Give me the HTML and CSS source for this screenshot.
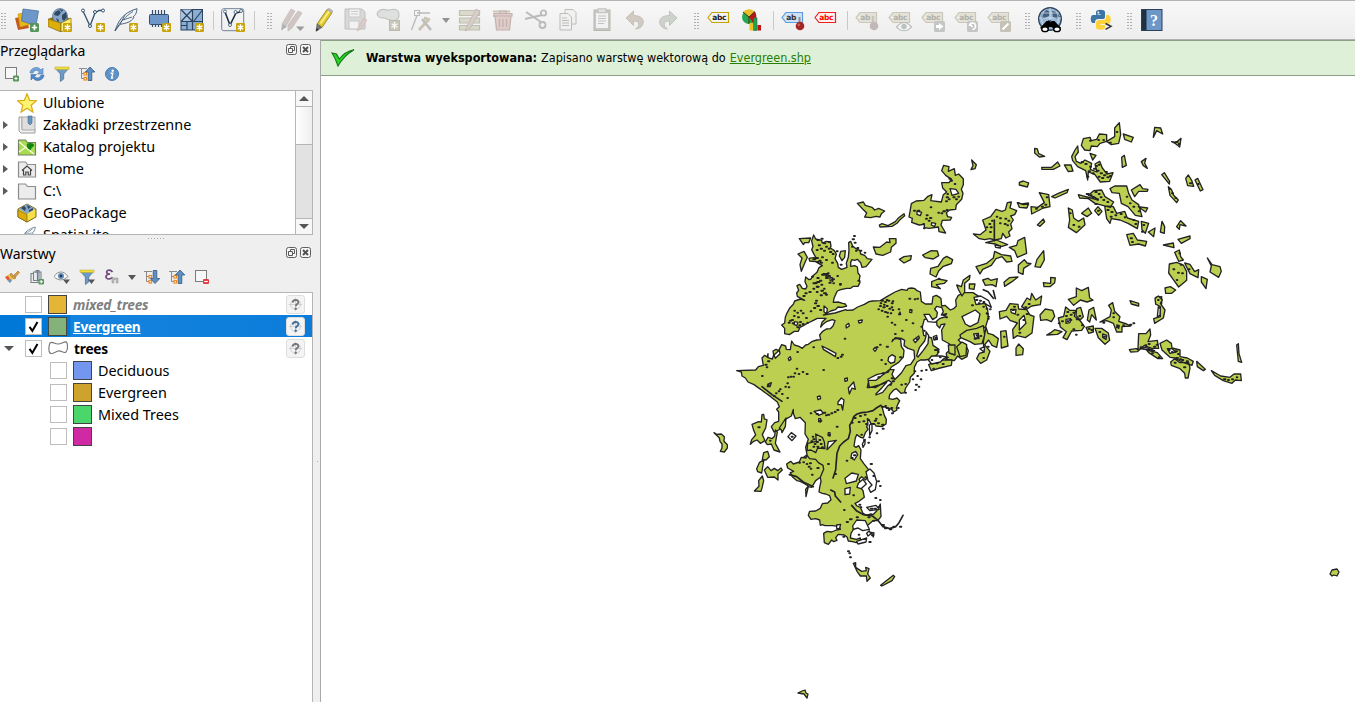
FILE: index.html
```html
<!DOCTYPE html>
<html lang="pl">
<head>
<meta charset="utf-8">
<title>QGIS</title>
<link rel="stylesheet" href="styles.css">
</head>
<body>
<svg class="defs" aria-hidden="true">
  <defs>
    <linearGradient id="gBlue" x1="0" y1="0" x2="1" y2="1"><stop offset="0" stop-color="#b4cbe6"/><stop offset="1" stop-color="#5d8abb"/></linearGradient>
    <linearGradient id="gSteel" x1="0" y1="0" x2="1" y2="1"><stop offset="0" stop-color="#7ba0cc"/><stop offset=".5" stop-color="#d7e3f0"/><stop offset="1" stop-color="#7a99bd"/></linearGradient>
    <linearGradient id="gGrey" x1="0" y1="0" x2="1" y2="1"><stop offset="0" stop-color="#f2f2f2"/><stop offset="1" stop-color="#c4c4c4"/></linearGradient>
    <linearGradient id="gYel" x1="0" y1="0" x2="0" y2="1"><stop offset="0" stop-color="#fbe84e"/><stop offset="1" stop-color="#d8b400"/></linearGradient>
  </defs>
  <symbol id="star-badge" viewBox="0 0 9 9"><rect width="9" height="9" rx="1.3" fill="#c8a30a"/><path d="M4.5 1.3v6.4M1.7 2.9l5.6 3.2M7.3 2.9L1.7 6.1" stroke="#fff" stroke-width="1.4"/></symbol>
  <symbol id="plus-badge" viewBox="0 0 9 9"><rect width="9" height="9" rx="1.5" fill="#57945a"/><path d="M4.5 1.8v5.4M1.8 4.5h5.4" stroke="#fff" stroke-width="1.7"/></symbol>
  <symbol id="box" viewBox="0 0 24 24"><path d="M0 11l12-5 11 5-10 4z" fill="#8d7513"/><circle cx="12" cy="8" r="7.5" fill="#86a5c7" stroke="#4a6583" stroke-width=".6"/><path d="M7 4l4-2 2 3-3 3-4-1zM14 7l4-3 1 5-3 4-2-2zM11 1l4 1-1 2zM8 10l3 2-1 3z" fill="#2f4963"/><path d="M0 11l13 4v9L0 18.500z" fill="#dcae0b" stroke="#7c6412" stroke-width=".7"/><path d="M13 15l10-5v9l-10 5z" fill="#fff173" stroke="#7c6412" stroke-width=".7"/></symbol>
  <symbol id="feather" viewBox="0 0 24 24"><path d="M1 23C4 14 8 5 23 .7c-.5 5-2 7-4 8l1 .6c-3 5-8 6-14 7z" fill="url(#gBlue)" stroke="#33526f" stroke-width=".9"/><path d="M1 23C6 14 12 8 19 3.500M6 16l5-9M9 12l9-3" fill="none" stroke="#33526f" stroke-width=".8"/></symbol>
  <symbol id="pencil" viewBox="0 0 24 24"><path d="M5 16L15 1.500l5 3.300L10 19.500z" fill="#e2c82f" stroke="#8f7d20" stroke-width=".8"/><path d="M8.500 15.500L17.300 3" stroke="#fff08a" stroke-width="1.700"/><path d="M15 1.500l2-1.200 3.800 2.500-.8 2z" fill="#bbb" stroke="#999" stroke-width=".5"/><path d="M5 16l5 3.500L4 23.300z" fill="#777" stroke="#555" stroke-width=".5"/><path d="M4.600 20l2 1.700L4 23.300z" fill="#222"/></symbol>
  <symbol id="tag" viewBox="0 0 24 24"><path d="M1 9.500l4-5h16.500v10H5z" stroke-width="1.200"/><circle cx="4.400" cy="9.500" r=".8" fill="#fff" stroke="none"/></symbol>
  <symbol id="funnel" viewBox="0 0 16 16"><path d="M1 2h14l-5.300 6v5l-3.300 2.500V8z" fill="#6d9bc8" stroke="#41698f" stroke-width=".7"/><rect x="1" y="1" width="14" height="2.500" fill="#f1df37" stroke="#b8a42e" stroke-width=".5"/></symbol>
  <symbol id="tree-up" viewBox="0 0 16 16"><path d="M0 2.500h8M2.500 2.500v10H8M2.500 7.500h4" fill="none" stroke="#8b8b8b"/><rect x="5" y="6.500" width="2.500" height="2.500" fill="#fff" stroke="#f08b20" stroke-width="1.200"/><rect x="5" y="11.500" width="2.500" height="2.500" fill="#fff" stroke="#f08b20" stroke-width="1.200"/><path d="M11 1l4.800 5H12.800v8.500H9.200V6H6.300z" fill="#5f8fc2" stroke="#31587f" stroke-width=".8"/></symbol>
  <symbol id="tree-down" viewBox="0 0 16 16"><path d="M0 2.500h8M2.500 2.500v10H8M2.500 7.500h4" fill="none" stroke="#8b8b8b"/><rect x="5" y="6.500" width="2.500" height="2.500" fill="#fff" stroke="#f08b20" stroke-width="1.200"/><rect x="5" y="11.500" width="2.500" height="2.500" fill="#fff" stroke="#f08b20" stroke-width="1.200"/><path d="M11 14.500l4.800-5H12.800V1.500H9.200v8H6.300z" fill="#5f8fc2" stroke="#31587f" stroke-width=".8"/></symbol>
  <symbol id="folder" viewBox="0 0 20 20"><path d="M1.500 3h7l2 2.500h8V18h-17z" fill="#ececec" stroke="#8c8c8c" stroke-width="1.200"/></symbol>
  <symbol id="float" viewBox="0 0 11 11"><rect x=".5" y=".5" width="10" height="10" rx="2" fill="#f5f5f5" stroke="#5f5f5f"/><path d="M4.500 4V2.500h4v4H7M2.500 4.500h4v4h-4z" fill="none" stroke="#5a5a5a"/></symbol>
  <symbol id="close" viewBox="0 0 11 11"><rect x=".5" y=".5" width="10" height="10" rx="2" fill="#f5f5f5" stroke="#5f5f5f"/><path d="M3 3l5 5M8 3L3 8" stroke="#505050" stroke-width="1.900"/></symbol>
  <symbol id="crs" viewBox="0 0 19 19"><circle cx="9.500" cy="9.500" r="5.500" fill="none" stroke="#c9cdd1"/><path d="M2 9.500h15M9.500 2v15" stroke="#c9cdd1"/><path d="M6.500 7.500C6 3.500 13 3.300 12.800 7c-.2 2-3 2.200-3 4.500" fill="none" stroke="currentColor" stroke-width="2.200"/><circle cx="9.700" cy="14.300" r="1.400" fill="currentColor"/></symbol>
  <symbol id="tick" viewBox="0 0 17 17"><path d="M4 9l3.200 4.500L13 3.500" fill="none" stroke="#000" stroke-width="2.300"/></symbol>
</svg>

<header class="toolbar">
  <i class="grip first"></i>
  <span class="tool"><svg viewBox="0 0 24 24"><path d="M0 10l11-2 3 12-11 2z" fill="#c2591f"/><path d="M3 6l12-2 2 12-12 3z" fill="#e9b818" stroke="#c49210" stroke-width=".6"/><path d="M8 1l15.500 2L21 17.500 6.500 13z" fill="#6c97c8" stroke="#4b739f" stroke-width=".8"/><use href="#plus-badge" x="15" y="15" width="9" height="9"/></svg></span>
  <span class="tool"><svg viewBox="0 0 24 24"><use href="#box" width="24" height="24"/><use href="#star-badge" x="15" y="15" width="9" height="9"/></svg></span>
  <span class="tool"><svg viewBox="0 0 24 24"><path d="M2 3l7 15 5-13 4-2.500h3" fill="none" stroke="#34506e" stroke-width="1.300"/><g fill="#fff" stroke="#34506e"><circle cx="2" cy="2.500" r="1.500"/><circle cx="9" cy="18" r="1.500"/><circle cx="14" cy="4" r="1.500"/><circle cx="22" cy="2.500" r="1.500"/></g><use href="#star-badge" x="15" y="15" width="9" height="9"/></svg></span>
  <span class="tool"><svg viewBox="0 0 24 24"><use href="#feather" width="24" height="24"/><use href="#star-badge" x="15" y="15" width="9" height="9"/></svg></span>
  <span class="tool"><svg viewBox="0 0 24 24"><path d="M5.500 2v17M8.500 2v17M11.500 2v17M14.500 2v17M17.500 2v17" stroke="#33506f" stroke-width="1.200"/><rect x="2.500" y="6.500" width="19" height="10" rx="1" fill="#6c97c8" stroke="#33506f"/><use href="#star-badge" x="15" y="15" width="9" height="9"/></svg></span>
  <span class="tool"><svg viewBox="0 0 24 24"><rect x="1" y="1.500" width="21.500" height="20.500" fill="#8caed4" stroke="#29435e"/><path d="M1 1.500h11.500v12H1z" fill="#a9c3e0"/><path d="M1 1.500l11.500 12M12.500 1.500L1 13.500M22.500 2l-9 11.500M1 13.500h21.500M12.500 1.500v20.500M7 13.500V22M1 17.500h6" fill="none" stroke="#29435e" stroke-width="1.200"/><use href="#star-badge" x="15" y="15" width="9" height="9"/></svg></span>
  <i class="sep"></i>
  <span class="tool"><svg viewBox="0 0 24 24"><rect x=".7" y=".7" width="22" height="22" rx="2" fill="url(#gSteel)" stroke="#6f8199"/><path d="M4 4l5 13 6-12 4-1" fill="none" stroke="#20344a" stroke-width="1.600"/><g fill="#fff" stroke="#34506e" stroke-width=".8"><circle cx="4" cy="3.500" r="1.500"/><circle cx="9" cy="17" r="1.500"/><circle cx="14.500" cy="4" r="1.500"/><circle cx="20" cy="3" r="1.500"/></g><use href="#star-badge" x="15" y="15" width="9" height="9"/></svg></span>
  <i class="sep"></i><i class="grip"></i>
  <span class="tool"><svg viewBox="0 0 24 24"><g class="off"><path d="M2 16L11 1l4 2-9 15-4 4zM8 17L18 3l4 2-10 15-4 3z" fill="#c2b5b3" stroke="#b5a9a8" stroke-width=".8"/><path d="M1 22l2-6 4 3z" fill="#999"/></g><path d="M16 18.500h8.500l-4.200 4.500z" fill="#9b9b9b"/></svg></span>
  <span class="tool narrow"><svg viewBox="0 0 24 24"><use href="#pencil" width="24" height="24"/></svg></span>
  <span class="tool"><svg viewBox="0 0 24 24"><g class="off"><path d="M1 1h17l3 3v17H1z" fill="#cfcfcf" stroke="#aeaeae"/><path d="M5 1h11v8H5z" fill="#f3f3f3" stroke="#b7b7b7"/><path d="M7 3.500h7M7 6h7" stroke="#bbb"/><path d="M5 13h10v8H5z" fill="#f3f3f3" stroke="#b7b7b7"/><path d="M14 20l5-10 4 2-6 9-4 2z" fill="#d1bcb8" stroke="#b9a5a1" stroke-width=".6"/></g></svg></span>
  <span class="tool"><svg viewBox="0 0 24 24"><g class="off"><path d="M2 3c4-4 6 0 10-1s10-2 10 5-8 6-12 4-7 0-9-3 0-4 1-5z" fill="#d6d9d7" stroke="#adb3b0" stroke-width="1.200"/><rect x="12.500" y="12.500" width="10" height="10" fill="#b9b6a4" stroke="#aaa893"/><path d="M17.500 14v7M14.500 15.700l6 3.500M20.500 15.700l-6 3.500" stroke="#fff" stroke-width="1.300"/></g></svg></span>
  <span class="tool"><svg viewBox="0 0 24 24"><g class="off" fill="none" stroke="#a4a4a4"><rect x="4.500" y="2.500" width="5" height="5"/><path d="M7 5h13M7 7.500L1.500 22" stroke-width="1.300"/><path d="M9 22l10-11M14 10l6 2" stroke="#bdb49d" stroke-width="3"/><path d="M12 11l9 11" stroke="#aaa" stroke-width="2.600"/></g></svg></span>
  <i class="drop"></i>
  <span class="tool"><svg viewBox="0 0 24 24"><g class="off"><path d="M1.500 2.500h20v5h-20zM1.500 10h20v5h-20zM1.500 17.500h20v4.500h-20z" fill="#d0cfbd" stroke="#adac99" stroke-width="1.200"/><path d="M9 18L18 1l4 2.500-10 17-5 2.500z" fill="#cfbeb9" stroke="#aa9e9b" stroke-width=".8"/></g></svg></span>
  <span class="tool"><svg viewBox="0 0 24 24"><g class="off"><path d="M2 3.500h17M2 8h10" stroke="#bcb59e" stroke-width="2"/><path d="M4 8h16l-1.500 14h-13zM3 5.500h18v2.500H3zM9 5V3h6v2" fill="#d9bfbb" stroke="#b19995" stroke-width="1.200"/><path d="M8.500 11v8M12 11v8M15.500 11v8" stroke="#b19995" stroke-width="1.300"/></g></svg></span>
  <span class="tool"><svg viewBox="0 0 24 24"><g class="off" fill="none" stroke="#a6a6a6"><path d="M2 4l15 10M1 11l17-4" stroke-width="2"/><circle cx="19.500" cy="5" r="2.700" stroke-width="1.800"/><circle cx="18.500" cy="17" r="3" stroke-width="1.800"/></g></svg></span>
  <span class="tool"><svg viewBox="0 0 24 24"><g class="off" fill="#f0f0ee" stroke="#a9a9a9"><path d="M8 1.500h8l3 3V16H8z"/><path d="M3 5.500h8l3.500 3.500v13H3z"/><path d="M5 10h5M5 12.500h7M5 15h7M5 17.500h7" stroke-width="1.200"/></g></svg></span>
  <span class="tool"><svg viewBox="0 0 24 24"><g class="off"><rect x="4" y="2" width="16" height="20.500" fill="#bbb8b0" stroke="#a3a19a"/><rect x="6" y="5" width="12" height="15" fill="#f3f3f3"/><rect x="8" y=".8" width="8" height="4" fill="#d9d9d9" stroke="#aaa"/><path d="M8 8h8M8 10.500h8M8 13h8M8 15.500h6" stroke="#b0b0b0"/></g></svg></span>
  <span class="tool"><svg viewBox="0 0 24 24"><path class="off" d="M3 10l7.500-7v4.500C19 7.500 22 12 19.500 17c-1.500 3-4.500 4-7 4 4.500-3 5-8-2-8v4.500z" fill="#c6bcb0" stroke="#aba49b" stroke-width=".8"/></svg></span>
  <span class="tool"><svg viewBox="0 0 24 24"><path class="off" d="M21 10l-7.500-7v4.500C5 7.500 2 12 4.500 17c1.500 3 4.500 4 7 4-4.500-3-5-8 2-8v4.500z" fill="#c1c6be" stroke="#a2aaa0" stroke-width=".8"/></svg></span>
  <i class="grip"></i>
  <span class="tool"><svg viewBox="0 0 24 24"><use href="#tag" width="24" height="24" fill="url(#gYel)" stroke="#c7a300"/><text class="abc" x="5.300" y="12.200" fill="#222">abc</text></svg></span>
  <span class="tool"><svg viewBox="0 0 24 24"><circle cx="9" cy="9" r="7" fill="#26a84f"/><path d="M9 9L3 4a8 8 0 0111.500-.5z" fill="#e8be2c"/><path d="M9 9l6-5.500c2 4 2 8-1.500 12z" fill="#b61818"/><path d="M9 9L3 4M9 9l6-5.500M9 9v7" stroke="#40371b"/><rect x="9.500" y="15" width="3.500" height="7.500" fill="#f0c01c"/><rect x="13.500" y="10" width="3.500" height="12.500" fill="#259f51" stroke="#187538" stroke-width=".6"/><rect x="17.500" y="17" width="3.500" height="5.500" fill="#c01313"/></svg></span>
  <i class="sep"></i>
  <span class="tool"><svg viewBox="0 0 24 24"><use href="#tag" width="24" height="24" fill="#cfe1f5" stroke="#5b9be0"/><text class="abc" x="5.300" y="12.200" fill="#333">ab</text><path d="M18.500 9v8" stroke="#8f8f8f" stroke-width="2"/><circle cx="19" cy="18" r="4.300" fill="#a52626"/><circle cx="17.800" cy="16.800" r="1.200" fill="#cb6969"/></svg></span>
  <span class="tool"><svg viewBox="0 0 24 24"><use href="#tag" width="24" height="24" fill="#fff0f0" stroke="#f21d1d"/><text class="abc" x="5.300" y="12.200" fill="#f00">abc</text></svg></span>
  <i class="sep"></i>
  <span class="tool"><svg viewBox="0 0 24 24"><use href="#tag" width="24" height="24" fill="#e4e2d6" stroke="#c8c7b9"/><text class="abc" x="5.300" y="12.200" fill="#b0b0ac">ab</text><path d="M18 8v8" stroke="#c7c4c4" stroke-width="2.500"/><circle cx="19" cy="18" r="4.300" fill="#c3b8b8"/></svg></span>
  <span class="tool"><svg viewBox="0 0 24 24"><use href="#tag" width="24" height="24" fill="#e4e2d6" stroke="#c8c7b9"/><text class="abc" x="5.300" y="12.200" fill="#b0b0ac">abc</text><path d="M8.500 19c5-6 10-6 15 0-4 5-11 5-15 0z" fill="#f4f4f4" stroke="#b9b9b9" stroke-width="1.200"/><circle cx="16" cy="18.500" r="2.700" fill="#bbc0c3"/></svg></span>
  <span class="tool"><svg viewBox="0 0 24 24"><use href="#tag" width="24" height="24" fill="#e4e2d6" stroke="#c8c7b9"/><text class="abc" x="5.300" y="12.200" fill="#b0b0ac">abc</text><rect x="13" y="13" width="11" height="11" rx="1.500" fill="#c4c6c6"/><path d="M15 17h3v-2l4.500 3.500L18 22v-2h-3z" fill="#fff"/></svg></span>
  <span class="tool"><svg viewBox="0 0 24 24"><use href="#tag" width="24" height="24" fill="#e4e2d6" stroke="#c8c7b9"/><text class="abc" x="5.300" y="12.200" fill="#b0b0ac">abc</text><rect x="13" y="13" width="11" height="11" rx="1.500" fill="#c4c6c6"/><path d="M15.500 18c0-4 6-4 6 0 0 2-1.500 3.500-3 3.500M16 16l2.500 3" stroke="#fff" stroke-width="1.600" fill="none"/></svg></span>
  <span class="tool"><svg viewBox="0 0 24 24"><use href="#tag" width="24" height="24" fill="#e4e2d6" stroke="#c8c7b9"/><text class="abc" x="5.300" y="12.200" fill="#b0b0ac">abc</text><rect x="13" y="13" width="11" height="11" rx="1.500" fill="#c5c3b6"/><path d="M15.500 21.500l6-6" stroke="#fff" stroke-width="2"/></svg></span>
  <i class="grip"></i>
  <span class="tool"><svg viewBox="0 0 24 24"><circle cx="12" cy="11" r="11.300" fill="#9bb7d6" stroke="#31475f" stroke-width="1.400"/><path d="M4 5l5-3 3 2-1 4-4 2-4 1zM14 3l5 1 3 5-3 2-4-2zM10 12l3 0 0 4-2 1z" fill="#44607f"/><path d="M1 10h22M12 0v12M3 5h18M6 3c-3 6-3 11 0 16M18 3c3 6 3 11 0 16" stroke="#dbe8f5" stroke-width=".7" fill="none"/><path d="M8.500 13h3l.8 1.500L13.500 13h3L23 20l-5 3-4.500-4h-2L7 23l-5-3z" fill="#000"/><ellipse cx="7" cy="21.200" rx="3.300" ry="2.400" fill="#fff" stroke="#000" stroke-width="1.400"/><ellipse cx="19" cy="21.200" rx="3.300" ry="2.400" fill="#fff" stroke="#000" stroke-width="1.400"/></svg></span>
  <i class="grip"></i>
  <span class="tool"><svg viewBox="0 0 24 24"><path d="M7 7V4c0-3 9-3 9 0v4.500c0 2-1 2.500-2.500 2.500H9c-2 0-3 1-3 4H4c-3 0-3-8 0-8h7.500V6z" fill="#3a75a6"/><path d="M17 7h2c4 0 3.500 9 0 9h-7.500v1H16v2.500c0 3-9 3-9 0V15c0-2 1-3 3-3h4c2 0 3-1 3-3z" fill="#fdd33b"/><circle cx="9.300" cy="4.500" r=".9" fill="#fff"/><path d="M16.500 15.500l5.500 2.800-5.500 3" fill="none" stroke="#333" stroke-width="1.500"/></svg></span>
  <i class="grip"></i>
  <span class="tool"><svg viewBox="0 0 24 24"><rect x="1.500" y="1.500" width="20.500" height="21" fill="#6d97c6" stroke="#2c4058"/><rect x="2" y="2" width="4.500" height="20" fill="#1f3143"/><text class="help" x="10" y="17.500">?</text></svg></span>
</header>

<div class="workspace">
  <aside class="dock">
    <div class="dock-title"><span>Przeglądarka</span><svg class="win"><use href="#float"/></svg><svg class="win"><use href="#close"/></svg></div>
    <div class="dock-tools browser-tools">
      <svg viewBox="0 0 16 16"><rect x="1.500" y="1.500" width="11" height="11" fill="#f7f7f7" stroke="#7c7c7c"/><rect x="9" y="9.500" width="6" height="6" rx="1.200" fill="#57945a"/><path d="M12 10.800v3.400M10.300 12.500h3.400" stroke="#fff"/></svg>
      <svg viewBox="0 0 16 16"><path d="M1 7c0-5 8-8 11-3l2-2v6H8.500l2-2C8 3.500 5 4 4 7z" fill="#73a3d6" stroke="#4b80b8" stroke-width=".6"/><path d="M15 9c0 5-8 8-11 3l-2 2V8.500h5.500l-2 2C8 13 11 12 12 9z" fill="#4f88c5" stroke="#3f73aa" stroke-width=".6"/></svg>
      <svg><use href="#funnel"/></svg>
      <svg><use href="#tree-up"/></svg>
      <svg viewBox="0 0 16 16"><circle cx="8" cy="8" r="6.500" fill="#5f92c7" stroke="#4a7bb0"/><circle cx="8.700" cy="4.700" r="1.200" fill="#fff"/><path d="M6.500 7.300h2.300L7.600 12h1.500" stroke="#fff" stroke-width="1.400" fill="none"/></svg>
    </div>
    <div class="browser">
      <ul class="tree">
        <li><i class="exp none"></i><svg viewBox="0 0 20 20"><path d="M10 .8l2.600 6.500 6.900.4-5.300 4.500 1.700 6.900L10 15.300l-5.900 3.800 1.700-6.900L.5 7.700l6.900-.4z" fill="#fff373" stroke="#d9aa14" stroke-width="1.200"/></svg>Ulubione</li>
        <li><i class="exp"></i><svg viewBox="0 0 20 20"><path d="M2 2h3v12h13v4H4l-2-2z" fill="#f1f1f1" stroke="#9b9b9b"/><path d="M5 2h13v13H5z" fill="#dedede" stroke="#aaa"/><path d="M11 1h4v7l-2 2-2-2z" fill="#6793bd" stroke="#41698f" stroke-width=".6"/></svg>Zakładki przestrzenne</li>
        <li><i class="exp"></i><svg viewBox="0 0 20 20"><path d="M1.500 3h7l2 2.500h8V18h-17z" fill="#a8dc4e" stroke="#76806a" stroke-width="1.200"/><path d="M2 5l15 12M2 15l7-5" stroke="#f4fae0" stroke-width="1.500"/><path d="M10 7c2-2 7-1 7 1s-3 2-3 5c-3 0-5-4-4-6z" fill="#138311"/></svg>Katalog projektu</li>
        <li><i class="exp"></i><svg viewBox="0 0 20 20"><use href="#folder"/><path d="M5 11.500l5-4.500 5 4.500M6.500 11v5h2.300v-3h2.400v3h2.300v-5" fill="none" stroke="#444" stroke-width="1.200"/></svg>Home</li>
        <li><i class="exp"></i><svg><use href="#folder"/></svg>C:\</li>
        <li><i class="exp none"></i><svg viewBox="0 0 20 20"><path d="M1 6l9-5 9 5v8l-9 5-9-5z" fill="#f6e049" stroke="#7c6412"/><path d="M2 6l8-5 8 5-8 5z" fill="#86a5c7"/><path d="M4 5l3-2 2 2-1 3zM10 2l4 2-3 2zM12 7l4-2v2l-4 2z" fill="#2f4963"/><path d="M1 7l9 4.500v7.500l-9-5z" fill="#dcae0b" stroke="#7c6412" stroke-width=".7"/></svg>GeoPackage</li>
        <li><i class="exp none"></i><svg viewBox="0 0 20 20"><use href="#feather" x="2" width="17" height="20"/></svg>SpatiaLite</li>
      </ul>
      <div class="scroll"><i class="btn up"></i><i class="thumb"></i><i class="track"></i><i class="btn down"></i></div>
    </div>
    <div class="hsplit"></div>
    <div class="dock-title"><span>Warstwy</span><svg class="win"><use href="#float"/></svg><svg class="win"><use href="#close"/></svg></div>
    <div class="dock-tools layer-tools">
      <svg viewBox="0 0 16 16"><path d="M1 8l4-3 5 4-4 5z" fill="#e8c84d"/><path d="M1 8l3 4 2-2-2-3z" fill="#e5533d"/><path d="M4 12l2 2 2-3-2-1z" fill="#5a96d6"/><path d="M6 6l4 4 2-1-5-5zM10 6l4-4 1.500 1.500L11.500 8z" fill="#d89b45" stroke="#a56d27" stroke-width=".6"/></svg>
      <svg viewBox="0 0 16 16"><path d="M4.500 4.500H2v9h7v-2.500M4.500 3v8.500H12V3zM7 4V1.500h3V11" fill="none" stroke="#77808a" stroke-width="1.100"/><path d="M8.500 1v10" stroke="#5284b6" stroke-width="1.300"/><rect x="9.500" y="10" width="5.500" height="5.500" rx="1" fill="#57945a"/><path d="M12.200 11v3.500M10.500 12.700H14" stroke="#fff"/></svg>
      <svg viewBox="0 0 16 16"><path d="M0 7.500C4 1.500 10 1.500 14 7.500 9 12 4 12 0 7.500z" fill="#f9f9f9" stroke="#8c8c8c"/><circle cx="7" cy="7" r="3" fill="#5f8db8"/><circle cx="7" cy="7" r="1.200" fill="#1f3347"/><path d="M9 10.500h7L12.500 15z" fill="#555"/></svg>
      <svg viewBox="0 0 16 16"><use href="#funnel"/><path d="M9 10.500h7L12.500 15z" fill="#555"/></svg>
      <svg viewBox="0 0 16 16"><path d="M8.500 3C6-.5 1.500 1.500 3 4c.5 1 2 1.200 3 1-3 0-5 2-3.500 4 1.500 1.800 4.500 1 6-.8" fill="none" stroke="#71497c" stroke-width="1.700"/><path d="M8 14V9h6v5h-1.800v-3.500H9.800V14z" fill="#bdbdbd" stroke="#999" stroke-width=".6"/></svg>
      <i class="drop dark"></i>
      <svg><use href="#tree-down"/></svg>
      <svg><use href="#tree-up"/></svg>
      <svg viewBox="0 0 16 16"><rect x="1.500" y="1.500" width="11" height="11" fill="#f7f7f7" stroke="#7c7c7c"/><rect x="9" y="10" width="6" height="5" rx="1.200" fill="#e0383e"/><path d="M10.200 12.500h3.600" stroke="#fff" stroke-width="1.200"/></svg>
    </div>
    <ul class="layers">
      <li><i class="fold"></i><i class="check"></i><i class="swatch amber"></i><b class="muted">mixed_trees</b><svg class="crs"><use href="#crs"/></svg></li>
      <li class="selected"><i class="fold"></i><i class="check"><svg><use href="#tick"/></svg></i><i class="swatch sage"></i><b class="link">Evergreen</b><svg class="crs"><use href="#crs"/></svg></li>
      <li><i class="fold open"></i><i class="check"><svg><use href="#tick"/></svg></i><svg class="poly" viewBox="0 0 20 16"><path d="M2 2c3-2 4 1 8 1s8-4 9-1c1 4 .5 7-1 9-2 2-5-2-8-1s-6 4-8 2-1-8 0-10z" fill="url(#gGrey)" stroke="#747474" stroke-width="1.100"/></svg><b>trees</b><svg class="crs"><use href="#crs"/></svg></li>
      <li class="child"><i class="check"></i><i class="swatch blue"></i>Deciduous</li>
      <li class="child"><i class="check"></i><i class="swatch gold"></i>Evergreen</li>
      <li class="child"><i class="check"></i><i class="swatch green"></i>Mixed Trees</li>
      <li class="child"><i class="check"></i><i class="swatch pink"></i></li>
    </ul>
  </aside>
  <div class="vsplit"></div>
  <main class="canvas">
    <div class="message">
      <svg viewBox="0 0 24 18"><path d="M1 4l4.500 1 2.800 5C12 5 17 2 23 .8 16 5 11 10 7 17 5 11 3 7 1 4z" fill="#22d822" stroke="#157315" stroke-width="1.100"/></svg>
      <b>Warstwa wyeksportowana:</b><span>Zapisano warstwę wektorową do</span><a>Evergreen.shp</a>
    </div>
    <svg class="map" viewBox="321 76 1034 626">
      <g class="land">
        <g transform="translate(700 270) scale(.33333)">
          <path d="M167 300l8-10 15-4-4-22 8-8 7 5 3-10 0 12 13 4 4-12-2-12 9-5 8 4 9-18 12 4 2 10 12 1 4-26 8 12 14 4 10 6 10-10 8-2 10-8 15-5 12-1-3-14 8-10 12-8 12-1 8-8 6-16-8-3-18 6-10 8-7 8 4-14 12-12-26 0-12 6-16 8-14 8-10 5-5 12-12 0-15 10-14-3 0-16-9-10 9-6 2-18 6-14 8-14 10-10 4-10 18-6 12 4-22-12-2-10 6-8-5-14 8-4 8 12 10 2 4-8-6-14 2-14 10 8 6-2 6-10 12-10 6-14 10-6-20-12-18-2-2-8 14-2 8 2-8-14-6-12 4-10-4-16 6-18 6 12 18 4 2 8 12-5 12 2 2 12-2 6 12 8 6 10-4 14 8 14 2 12 10 6 16-6-2-12 6-18 2-22-1-22 6-4 6 14 10 8 12 6 2 10 12 4 8 10 14 2-8 10-10 12-12 2-4-14-10-10-8 3-8-2-4 8 0 12 12-2 8 4 2 18 6 8-2 12 2 8-6 12-14 0-8 6-12 0-18 4-10 4-4 8-6 14-2 12 14-1 14 4 8 2 4 6-14 4-12-1-8 8-14 4-22 12 35-6 32-10 4 2 18-1 14-9 20-8 14-8 10-2 24-1 20-12 24-14 20-8 16 3 4-6 10-1 10 2 6 6 10 4 3 28 12 8 20 0 3-22 10-4 10 6 4 4 2 22 10-2 16 14 10-4 8-8-2-18 8-14 18-8 26 0 22 14 14 18 8 20 2 24-8 26-20 14-24 10-24 4-14 12 8 8 14 6 8 18-4 18-16 8-12-10-10 14-22-4-2-18 10-10 0-18-22-12-2-30 10-18-12 2-4 10-8-8-2-18-14-2-22 2-6 22 4 26 24 8 4 22 18 12-4 14-16 14-22 4-14 0-10 6-8 16 0 18-12 12-2 14-12 18-4 14-10 2-14-14-8 4-12 14-2 12 12 2 12-4 8 8-6 12-4 10 2 6-10 6-6-8-12-4-12-4-4 4 6 22 6 12-1 14-12 8-18-2-4-6-12-2-4-10-6-4 2 16-4 8 4 8-8 10-6 16-8-2-12-8-4 10-4 24 6 4 8-5 7 13-2 26 10 14 14 18 0 20-8 12-12-10-8 8 6 14 0 12 6 8 4 20-16 12-12 6 6 8 10 4 8 18 10 6 14-4 6 2 10-10 12-22 2 38 -10 12-14 0-14 12-16 4-6 8-12-6-12 10-6 10-2 14 18 4 12-4 0 8-12 6-12-3-12-2-4-12-8-6-18-2-8 10 4 8-10 4-6-5-10 13-12-5-2-28 10-6 14 2 14-6 12-2-4-9-20-2-22 0-8-3-6 2-2-16-12-4-14 2-8-12 4-12 18-1 14-8 6-14 16-2 10-10-4-12-12-5-10-2-10-4 2-14 4-18-2-12-8-10-16-10-10-4-8-10-6-12-2-14 10-8-4-22 8-24-10-16 1-34-16-16-14 4-6-16 0-12-6 20-18 10-4 18-16 14-14 6-8-16 10-12 12-4 0-28-6-8 8-8-6-14-20-16-14-10-16-12-20-14-18-8-8-12-10-6-2-12-14-4z"/>
          <path d="M42 488l8 5 14-1 9 8-1 14 10 10 0 10-9 12-12-2 5-10 0-12-6-8-2-10-8-8z"/>
          <path d="M156 463l20-8 8 1 2-22 5-1 2 14 8 3-4 24-10 20 8 18-14 8-10-10-10 4-10 9 4-14 12-14-6-14z"/>
          <path d="M196 516l8-14 12 4 8-8 2-18 6 6-6 34 14 26-18-6-8-18-12 2z"/>
          <path d="M238 474l20-30-2 26-10 18-2-8zM187 568l4-20 12-4 5 16-10 10zM170 596l8-18 14-9-4 22-3 18-12-4zM193 600l10-10 10 12 10-7 10 7 10-8 4 6-13 12 0 18-11-9-20 1z"/>
          <path d="M176 632l11-14 4 14-4 18-4 14-20-1 14-14z"/>
          <path d="M260 582l12-8 8 8 18-6 6-14 14 2 3-8 8 10 18 2 8 10 14 8 2 12-10 24-14 10-12 20-10-2-7 30-1-22 8-10-10-6-14-8-10-2-14-12-6-12 10-4-18-10z"/>
          <path d="M323 520l26-6-2-22 20 10 6 14 2 20-22-2-6 14-14-8-12 2zM460 880l7-2 0 14 18 12 14-2-2-10 10 4-4 16 8 12-10 10-2-16-18 0-10-14zM542 946l38-30 4 4-8 12-30 16z"/>
        </g>
        <g transform="translate(780 150) scale(.33333)">
          <path d="M232 160l18-4 6 10 20 6 8 8 12-5 18 8-10 8-4 10-12-2-16 4-18-2 6-12-12-12zM298 225l8-4 18 6 22-12 10-12 16-12 2 6-14 12-8 10-16 10-36 2z"/>
          <path d="M390 185l4-24 14-8 24-2 12-12 12-5-4 18 32 4 6-22 10-8-12-12-3-16 22 0 8-10-18-12-12-14 6-16 16 4-2 14 18-8 3 20 10-4 14 14 0 18-6 14 5 12-4 18-16 16-2 14-18 2-10 8 4 12 12 2-4 8-24 1-4 14 14 24-20-4-2-14-28 4-14-2 0-10-16 2-22-8 2-12-10-4z"/>
          <path d="M575 30l14 14-4 12-12 3 6-12zM720 97l24 1-4 10-20-4zM58 266l34-2-6 14-12 0-4 6zM54 312l18-8 10 18-10 22-8 20-4-20 6-20zM178 318l4-14 14-2-2 20-8 10z"/>
          <path d="M280 291l20 1 20-16 10 2-2-12 20 0 0 14-14 12-2 14-24 10-20-4zM358 328l14-8 22-3-2 12-20 10zM428 315l26-13 18 1 4 14-16 10-24-4zM452 355l22-6 16-24 10-6 18 10-4 12-12 4-12 4-14 14-8 18-18-9zM455 395l20-8 26 5-8 8-24 4 12 12-26-6z"/>
          <path d="M580 252l20 2 18-14-10-30 24-10 16-22 18 6 10-4 6-22 12-2-4 18 20 8-6 12-12 4 8 12-8 12 4 14-10 10 4 12-12 6-10-14-4 16-20 4-14-4-16 3-16-3zM617 278l32-8 34 14-20 6-16-8z"/>
          <path d="M588 350l32-10 20-16 4-20 20 10 28 4 4 16-16 2-14-16-18 6-14 20-26 12-8 14zM715 158l10 4 20-3-4 14-22-2zM688 292l22-6 4-14 20-10 6 48-28 12-8-20zM530 405l14 5 6-20 20-14-2 12-14 12 0 26-8 12-10-18zM568 402l17 0-3 16-14-2zM608 390l16-5 8 6 20-5-4 24-12-6-20 2zM672 397l16-14 26-2-18 14-22 14z"/>
        </g>
        <g transform="translate(930 220) scale(.33333)">
          <path d="M315 140l6-22 20-26 2 28-12 22zM340 188l22 2 0-18 14 2-2 14-14 12-18 0zM265 135l18-16 8 10 12 2-22 14-2 18-14-6z"/>
          <path d="M90 345l20-14 30-6 20-8 4 28-8 26-22 2-14-8-28-12zM168 322l6 18 14 4 17 12-5 26-14-6-10-16-12 14 16 20-10 26-18 10-12-14 8-16 14-4-2-30zM212 334l16-2 6 46-20 6z"/>
          <path d="M208 275l20-4 12-20 24 2 2 14 24 2 10 16 12 4-6 50-20 14-24-6-12 8-2-26 14-20-22-8-10-12-20 8zM275 260l16-26 10 6 4-20 12 20 18-12-4 26-26 4-16 10zM258 384l8-12 14 14-2 18-20 2zM330 285l16-18 22 4 6 18-10 16-14-6-18 2zM350 345l14-8 10-8 22 6-14 8zM385 294l16-5 6-28 12 10 18 0-4 18 18 14 12 16-8 12-30 2-14 26-12-6 10-18-18-14z"/>
          <path d="M415 238l24-8 0-26 16 8 20-10 4 32 10 6-18 6-20-6-20 16zM440 266l12-4 8 28-10 10-12-14zM472 300l5-30 14-8 8 38-14-16-6 22zM468 322l22-4 0 18-14 4zM495 325l20 0 20 14 4 22-14 12-20-20zM510 306l30-16 4-20-8-14 12-8 6 26 16 16-4 14 24 8 12 6-26 2 0 16-16 0-10-26-20-8z"/>
          <path d="M55 375l20 0 0 30-18-6zM80 380l16-14 14 8-2 32-18 4zM-4 434l20-10 20-4 30 0-2 16-34 8-26 8z"/>
        </g>
        <g transform="translate(1010 110) scale(.33333)">
          <path d="M74 115l8 2 4 14 18 8-16 2-14-12zM95 172l30 0 18-16 7 12-20 10-34 0zM163 165l20 0 6 18-14 2zM188 152l-3-12 10-20 8-12 2 18-10 14 4 14 14 6 12-10 20 10-4 18 20 8-6-24 14-8 8 20 14 18 18-4-10 26-28 2-16-22-20-8-2 24-6-28-24-12z"/>
          <path d="M214 106l6-20 20-4 4 10 16-4 8-16 22 2 0 20-20 6-8 10-18-2-4 14-16-2zM290 94l24-14 0-26 14-16 4 36-6 26-22 4zM340 72l30 10-6 14-20-8zM240 130l18 6-10 14zM335 142l8-6 6 30-12 6zM394 155l14-10-4 14 8 16-12-8zM430 82l4-30 18 2 6 18-18-10zM485 95l14 2 14-12-4 26-12-10z"/>
          <path d="M28 217l12-4 16 6-4 12-24-6zM455 194l8-6 16 26-1 8zM475 230l10 10 6 16 14 14-5 8-20-22zM527 205l8-10 10 16 6 18-18-2zM555 210l8-5 16 34-8 4zM125 260l20-10 30-12-4 10-36 16zM88 248l28 6 4 36-20 4-35 18-2-22 20 2 20-14zM22 278l18 6 16-2-6 12-22-2zM82 345l18-18 4 8-14 14z"/>
          <path d="M205 254l4 10 26 2 20 14 46 12 10-16-26-16-10-20-24 2-16 14 20 6 10 8zM300 236l14-8 36 0 6 22 10 20 20 14 10 36-20-4-22-26-20-10-6-30-22-2zM364 240l26-16 8 12 16 2-2 6-26 0-12 16zM385 290l28 4-6 12zM254 302l10-12 12 14-10 12zM284 288l26 2 10 20 24-6 8 20 34 10-4 22-28-16-24-10-26-4-4 14-10-14zM175 294l12 6 4 24 14 10 16-10 4 20-26 24-24-16 4-22zM215 310l20-16 10 16-14 10z"/>
          <path d="M394 334l22 6-10 30-10-10zM415 366l20-12-4 26zM456 334l8 16-1 20-12-4zM350 374l20-4 12 20 28 4-4 14-20-6-26 4zM500 350l12-18 16 16-18-4-2 14zM504 388l36-10 0 8-26 14zM460 405l30-6 2 14zM494 427l14-7 4 20 8 10-14 4zM478 462l22-5 20 8 10 20 0 26-24 20-16-22-14-20zM524 459l16 4 14 22 12-6-2 24-24-12zM592 444l14 20 24 6 4 14-8 18-26-16 4-18zM574 500l18 8-4 28-14-20zM465 534l16-4 16 10-12 10-18 0zM437 562l18-2 0 22-18 0zM360 572l26 8 0 8-22-6z"/>
        </g>
        <g transform="translate(1080 270) scale(.33333)">
          <path d="M225 85l10-7 12 12-6 10 14 20-5 24-26 16-3-14 20-6 0-30-14-8zM148 239l26-4 2-44 22 0 12-14 2 18-8 20 28-4 4 24-20 0-24-8-20 18-20 1zM200 240l32 8 16 18-14 0-28-18zM240 220l20-10 14 10 2 14 24 6 0 20 22 4 18 10-4 12-30-10-20-12-16-2-24-22zM272 276l12-10 16 12 26 0 4 16-6 30-8 0-2-14-14-14-26-10zM350 274l26 24-6 4-18-12zM394 302l28 16 28 4 12-10 20 0 2 20-18-2-10 10-26-8-26-16zM470 225l5-4 2 30 8 26-10-3z"/>
        </g>
        <path d="M1330 574l2-4 5-1 2 3-2 4-3-1-2 1zM798 693l4-2 3-1 1 3 2 1-1 4-3-4z"/>
      </g>
      <g class="hole">
        <g transform="translate(700 270) scale(.33333)">
          <path d="M576 215l10-12 18 2 10 6-2 16 12 8 18 6 2 24-12 18-14 4-14 22-20 20-8-16 6-14-14 0-20 16-20 16-22 0-4 22 14-2 10 2 20-12 20-10 10 8-12 8-16 20-20 8 0-4 18-18 14-16-22 8-30 8-4-26 20-10 8-4 32-6 10-16 22-14 14-16 2-20-8-12-2-20-12-4-12 4z"/>
          <path d="M678 185l8 12-2 24-14 20-16 20-4-4 8-24 16-20 4-14zM672 133l16 0 10 16 12-8 2-14-8-10 6-8 16 4 4 12-6 10 16-4-6 10-14 4-14 12-22-2zM566 262l10-8 10 6-2 16-12 4-8-8zM640 210l16-12 2 6-12 14zM685 270l10-12 30 0 20 4-14 4-10 10-26 6z"/>
          <path d="M222 255l16-14 2 10-14 14zM265 265l6-5 2 8-6 4zM438 166l8-6 2 8-9 6zM475 152l12-2-2 7-8 2zM596 134l4-8 2 8zM630 118l6 2-1 8-6-1zM520 238l6-6 4 6-5 6zM434 326l8-2 0 8-7 2zM352 380l8-2 2 8-8 3zM445 354l16-18 5 22-10-4-8 18zM414 396l10-12 8 6-4 30-4-16-10 0zM342 424l20-4 8 10-14 6zM356 446l6 0 0 10-6-1zM508 466l8-6 0 22-7 14zM487 522l8-14 0 14-6 10zM455 550l12-6 6 10-10 16-10-6zM366 228l20 10 22 12-2 10-16-10-20-12zM284 155l10 2-4 10-8-4zM372 108l10 8-2 14-8-4zM204 342l10-4-4 12-8 0zM264 500l10-12 14 10-12 14zM385 515l24-4-16 16-12 12zM385 488l5 0 0 10-6-2z"/>
          <path d="M435 625l20-16 20 4-6 20-30 8zM475 640l14-12 10 14-16 14-12-4zM498 605l12-8 12 12 8 26-4 24-14 8-6-12 10-10-12-14zM458 768l12-18 26 2 12 26-20 4-14-8-14 4zM500 790l8-8 4 10-8 6zM435 656l16-4-2 20-14 2zM470 814l30-10-2 12-24 6zM500 712l28-6 10 12-28 4zM410 765l12-2-4 14-8-2zM514 787l8 2-2 12z"/>
        </g>
        <g transform="translate(780 150) scale(.33333)"><path d="M510 116l18 2 8 12-20 6zM411 183l14 4-4 10-10-4zM455 218l12 2-3 10-10-5zM150 382l8 2 0 10-8-3zM645 285l16 3 0 6-14-2z"/></g>
        <g transform="translate(930 220) scale(.33333)"><path d="M96 290l40-20 14 12-6 26-24 12-14-8zM132 232l20-4 24 14 8 20-20-12-26 4zM242 268l16 0-2 14-12-4zM268 300l14-14 6 24-20 20zM408 298l14-2-2 12-12 2zM131 342l14-2 2 16-12-2zM518 342l12 4-2 12-10-6zM150 386l14-6-2 16zM10 350l10-4 2 12-10 2zM560 315l8 2-2 8z"/></g>
        <g transform="translate(1080 270) scale(.33333)"><path d="M262 236l14 0 12 10-18 4zM235 110l6 6-1 20-8 4zM180 236l16-4 28 10-16-2z"/></g>
      </g>
      <g class="river">
        <path transform="translate(700 270) scale(.33333)" d="M543 406l-14 8-10 8-16 4-18 2-14 4-10 8-4 12-8 14 2 18-6 22-14 10-12 12-8 22-2 24-2 26-8 24M392 660l12 6 2 12 16 18M455 706l14 16 22 12 26 4 18 14 14 18 20 6 18-6 10-12 12-22M268 614l22 6 20 16 30 14M186 350l30 24 30 20"/>
        <path transform="translate(930 220) scale(.33333)" d="M193 0v62M190 235l-16-20-14-6M190 212l6 24"/>
      </g>
      <g class="speck">
        <path transform="translate(700 270) scale(.33333)" d="M340 40h8M352 36h6M378 24h6M396 28h6M388 38h4M412 18h2M420 42h3M364 62h5M372 70h6M378 74h3M362 76h4M350 66h3M345 100h4M352 108h5M342 114h4M360 120h4M348 92h3M372 56h2M366 14h8M378 12h6M385 18h5M352 50h4M316 70h4M328 66h4M310 78h4M283 122h2M292 128h2M302 122h2M308 130h3M282 138h2M294 142h3M318 144h3M332 124h2M270 152h3M278 160h4M266 158h3M300 156h3M308 162h3M322 158h2M292 172h4M276 150h3M298 166h3
          M545 92h4M555 96h3M565 92h3M575 100h3M540 108h3M550 112h4M560 108h3M568 116h3M545 122h3M555 126h3M535 118h2M562 128h2M572 130h2M560 90h2M578 94h2M542 100h2M575 112h2M552 104h2M578 120h2
          M628 86h3M644 88h2M652 86h2M596 118h2M562 140h2M575 158h2M584 164h2M618 150h2M638 160h2M585 192h2M606 182h2M664 170h2M672 182h2M650 208h3M706 204h4M710 240h2M560 230h4M530 232h3M540 224h2M544 270h2M556 282h2M600 262h4M575 325h6M548 310h5M535 322h4M578 334h4M570 344h3
          M434 206h2M370 300h2M412 264h3M422 260h3M426 254h3M292 246h2M340 232h2M290 296h2M284 310h2M296 312h2M308 306h2M320 312h3M272 320h2M264 322h2M280 320h2M262 340h2M256 350h2M266 352h2M228 370h2M236 364h2M246 372h2M222 378h2M262 384h2M240 358h2M196 284h4M204 274h4M200 292h2M186 318h2M205 345h2
          M644 304h2M664 302h2M678 300h2M638 328h2M652 318h2M662 328h2M604 344h2M616 342h2M648 344h3M656 350h2M646 360h2M616 368h2M700 296h2M695 270h2M720 262h2M738 268h2
          M545 410h3M560 414h4M574 414h3M594 414h2M566 420h2M556 408h2M576 430h3M540 434h3M524 452h4M534 460h3M546 464h4M548 476h3M528 446h2M520 462h2M476 456h3M490 454h3M498 462h3M504 450h2M484 494h2M530 490h2M508 502h2M505 518h2M464 444h3M480 438h3M494 434h3M456 458h2M492 510h2M462 556h4M455 564h3M410 470h3M388 494h2M384 582h3M406 612h2M352 594h4M330 580h3M320 582h2M310 577h2M298 578h2M336 614h2M326 590h3M332 596h2M332 430h2M350 432h4M372 428h4M384 434h4M394 430h3M404 426h3M412 420h3M360 452h4M378 436h2M340 508h4M350 516h4M358 510h3M344 522h3M362 522h3M334 514h3M340 530h3M352 530h3M366 532h3M338 500h2
          M440 572h2M460 676h2M512 582h4M520 618h3M534 634h3M540 648h2M496 622h2M526 684h3M540 690h2M478 704h3M482 712h2M512 716h6M524 716h4M534 712h3M520 752h3M476 794h2M516 796h4M508 816h4M430 800h3M444 844h3M448 850h2M505 742h4M555 775h4M570 778h4M548 765h4M470 742h4M450 748h5M440 756h4M580 770h3M450 862h3M600 770h4M432 720h2M175 472h4M210 512h2M275 500h3"/>
        <path transform="translate(780 150) scale(.33333)" d="M112 270h5M124 266h4M132 280h4M116 286h4M122 296h4M138 290h3M146 296h3M150 306h4M132 302h3M158 312h3M110 300h3M108 324h6M100 328h6M118 332h4M126 322h3M112 336h4M122 338h4M170 304h3M146 276h3M138 330h3M156 338h3M182 344h3M218 268h4M224 278h3M216 290h2M232 294h3M242 302h2M254 308h2M228 302h2M222 258h3M130 372h3M138 378h3M112 384h4M120 392h4M108 398h3M144 370h2M160 400h2M180 404h2M235 392h3M96 380h3M124 404h3M110 410h3M100 416h3M414 182h4M402 182h3M440 196h3M450 204h4M446 212h3M438 206h3M430 222h2M490 184h5M500 180h3M484 190h3M475 188h2M452 172h2M500 142h4M506 148h3M498 154h3M520 142h4M528 148h3M535 140h2M512 92h4M524 102h2M508 86h4M502 132h2M432 235h2M476 386h2M628 222h3M632 232h3M630 246h3M620 232h2M636 212h2M660 205h3M676 206h3M685 212h3M674 222h3M682 226h2M660 220h2M650 200h2M610 470h2M620 490h2M625 500h2"/>
        <path transform="translate(930 220) scale(.33333)" d="M138 240h4M150 242h3M160 246h3M146 250h3M126 256h3M170 266h2M180 268h2M172 282h2M174 296h2M140 346h4M134 356h4M142 352h3M152 348h2M40 285h4M48 292h3M15 390h2M24 396h2M20 430h3M38 432h3M248 270h4M262 284h3M252 260h3M268 338h3M280 300h3M290 282h4M296 252h3M286 262h3M412 276h3M422 284h3M408 288h3M420 300h4M412 304h3M430 278h3M440 298h3M448 288h3M456 316h2M386 310h3M396 304h3M430 328h3M438 344h2M508 336h3M522 350h3M476 326h3M484 330h3M560 322h3M550 292h2M580 316h2M222 350h2M174 380h2M160 414h2"/>
        <path transform="translate(1010 110) scale(.33333)" d="M215 156h4M226 162h4M240 170h3M236 184h4M252 176h4M262 182h4M272 190h4M282 196h4M292 202h4M276 204h4M266 200h3M288 186h3M258 168h3M266 164h3M300 198h3M248 190h3M232 200h3M230 252h6M256 246h4M266 252h3M248 262h4M260 268h4M272 262h3M280 270h3M292 276h3M242 256h3M256 282h4M264 302h3M292 300h4M304 306h4M316 316h3M332 312h3M344 322h3M370 330h3M376 342h3M302 320h3M350 260h2M370 290h3M386 304h2M360 280h2M400 345h3M396 365h3M110 262h3M106 284h3M96 290h3M78 296h3M240 92h2M265 90h2M280 90h2M300 98h3M320 66h2M490 478h3M504 488h3M516 490h3M500 510h2M512 464h4M536 478h3M478 236h3M486 250h3M496 264h3M540 220h4M564 222h2M180 310h2M190 345h3M206 350h3M498 96h5M506 102h3M362 385h4M366 396h3M508 430h2"/>
        <path transform="translate(1080 270) scale(.33333)" d="M182 232h3M172 238h3M196 226h3M206 222h3M222 230h4M230 224h3M266 240h3M286 244h5M294 252h3M290 264h4M306 270h4M320 274h4M312 292h4M284 278h3M276 246h2M300 268h3M432 328h4M444 330h3M456 328h3M470 322h2M234 90h2M216 250h3M236 262h3M100 130h2M70 158h3M150 164h4M160 160h3"/>
      </g>
    </svg>
  </main>
</div>
</body>
</html>
```

FILE: styles.css
```css
* { box-sizing: border-box; }
body {
  margin: 0;
  width: 1355px;
  height: 702px;
  overflow: hidden;
  display: flex;
  flex-direction: column;
  background: #efefef;
  color: #000;
  font: 14.4px/22px "Noto Sans", "Open Sans", sans-serif;
}
ul { list-style: none; margin: 0; padding: 0; }
svg { display: block; flex: none; }
.defs { display: none; }

.toolbar {
  flex: none;
  height: 40px;
  display: flex;
  align-items: center;
  border-top: 1px solid #b4b4b4;
  border-bottom: 1px solid #b0b0b0;
  background: linear-gradient(#f8f8f8, #ededed);
}
.tool { width: 33px; flex: none; display: flex; justify-content: center; }
.tool.narrow { width: 31px; }
.tool svg { width: 24px; height: 24px; overflow: visible; }
.off { opacity: .72; }
.sep { width: 8px; height: 19px; flex: none; background: linear-gradient(#c9c9c9, #c9c9c9) 4px 0 / 1px 100% no-repeat; }
.grip { width: 18px; height: 17px; flex: none; background: radial-gradient(circle, #b5b5b5 .7px, transparent .9px) 9px 0 / 3px 3px no-repeat; background-repeat: repeat-y; }
.grip { background: radial-gradient(circle, #b0b0b0 .6px, transparent 1px) 8px 0 / 4px 3px repeat-y, radial-gradient(circle, #b0b0b0 .6px, transparent 1px) 11px 0 / 4px 3px repeat-y; }
.grip.first { width: 10.500px; background-position: 0 0, 3px 0; }
.drop { width: 15px; flex: none; display: flex; justify-content: center; }
.drop::after { content: ""; border: 4.500px solid transparent; border-top: 5px solid #929292; border-bottom: 0; }
.drop.dark::after { border-top-color: #555; }
.abc { font: bold 7.500px "DejaVu Sans", sans-serif; letter-spacing: -.4px; }
.help { font: bold 16px "Liberation Serif", serif; fill: #fff; }

.workspace { flex: 1; min-height: 0; display: flex; }
.dock { width: 313px; display: flex; flex-direction: column; }
.dock-title { height: 22px; flex: none; display: flex; align-items: center; gap: 3px; padding-right: 2px; line-height: 20px; }
.dock-title span { flex: 1; font-size: 14px; letter-spacing: -.1px; }
.win { width: 11px; height: 11px; margin-bottom: 3px; }
.dock-tools { height: 28px; flex: none; display: flex; align-items: center; gap: 9px; padding: 0 0 4px 4px; }
.dock-tools svg { width: 16px; height: 16px; }
.layer-tools .drop { width: 6px; }

.browser { height: 145px; flex: none; display: flex; background: #fff; border: 1px solid #b5b5b5; border-left: 0; overflow: hidden; }
.tree { flex: 1; padding-top: 1px; }
.tree li { height: 22px; display: flex; align-items: center; white-space: nowrap; }
.tree svg { width: 20px; height: 20px; margin-right: 6px; }
.exp { width: 17px; }
.exp::before { content: ""; display: block; width: 0; margin-left: 3px; border: 4.500px solid transparent; border-left: 5px solid #5c5c5c; border-right: 0; }
.exp.none::before { visibility: hidden; }
.scroll { width: 17px; display: flex; flex-direction: column; border-left: 1px solid #b5b5b5; }
.btn { height: 16px; display: flex; justify-content: center; align-items: center; background: #f7f7f7; }
.btn::after { content: ""; border: 5px solid transparent; }
.up { border-bottom: 1px solid #b5b5b5; }
.up::after { border-top: 0; border-bottom-color: #555; }
.down { border-top: 1px solid #b5b5b5; }
.down::after { border-bottom: 0; border-top-color: #555; }
.thumb { height: 38px; background: linear-gradient(90deg, #fff, #eee); border-bottom: 1px solid #b5b5b5; }
.track { flex: 1; background: #e2e2e2; }
.hsplit { height: 7px; flex: none; background: radial-gradient(circle, #aaa .6px, transparent 1px) 0 2px / 3px 3px repeat-x; width: 18px; margin-left: 147px; background-position: 0 2px; }
.hsplit + .dock-title { height: 23px; }

.layers { flex: 1; background: #fff; border-top: 1px solid #b5b5b5; border-right: 1px solid #b5b5b5; margin-top: -1px; }
.layer-tools { height: 28px; }
.layers li { height: 22px; display: flex; align-items: center; padding: 1px 7px 0 0; white-space: nowrap; }
.layers .selected { background: linear-gradient(90deg, #0078d7 70px, #1484df 71px, #0c7cda); color: #fff; }
.layers b { flex: 1; font-size: 13.700px; letter-spacing: -.2px; }
.muted { color: #808080; font-style: italic; }
.link { text-decoration: underline; }
.fold { width: 25px; }
.fold.open::before { content: ""; display: block; width: 0; margin-left: 4px; border: 5px solid transparent; border-top-color: #555; border-bottom: 0; }
.check { width: 17px; height: 17px; background: #fff; border: 1px solid #bdbdbd; margin-right: 6px; }
.check svg { width: 15px; height: 15px; }
.swatch { width: 19px; height: 19px; border: 1px solid #444; margin-right: 6px; }
.poly { width: 20px; height: 16px; margin-right: 6px; }
.crs { width: 19px; height: 19px; border-radius: 3px; background: #f4f4f4; border: 1px solid #ddd; color: #777; }
.selected .crs { color: #426f9c; }
.child { padding-left: 50px !important; }
.amber { background: #e5b636; }
.sage { background: #85b66f; background: #83b37a; }
.blue { background: #7397ef; }
.gold { background: #cfa22c; }
.green { background: #4ad66b; }
.pink { background: #cf29a4; }

.vsplit { width: 8px; border-right: 1px solid #a9a9a9; background: radial-gradient(circle, #aaa .6px, transparent 1px) 3px 420px / 3px 3px no-repeat; }
.canvas { flex: 1; background: #fff; display: flex; flex-direction: column; }
.message {
  height: 36px;
  flex: none;
  display: flex;
  align-items: center;
  background: #dff0d8;
  border: 1px solid #8d9f88;
  border-left: 0;
  border-right: 0;
  padding-left: 10px;
  font: 12.500px/16px "DejaVu Sans Condensed", "DejaVu Sans", sans-serif;
}
.message svg { width: 24px; height: 18px; margin-right: 11px; }
.message span { margin: 0 4px; }
.message b, .message span, .message a { white-space: nowrap; }
.message a { color: #278000; text-decoration: underline; }

.map { width: 1034px; height: 626px; }
.land { fill: #bccf50; stroke: #232323; stroke-width: 4px; stroke-linejoin: round; }
.land > path { stroke-width: 1.300px; }
.hole { fill: #fff; stroke: #232323; stroke-width: 4px; stroke-linejoin: round; }
.river { fill: none; stroke: #232323; stroke-width: 5px; stroke-linejoin: round; stroke-linecap: round; }
.speck { fill: none; stroke: #232323; stroke-width: 6px; stroke-linecap: round; }
```
